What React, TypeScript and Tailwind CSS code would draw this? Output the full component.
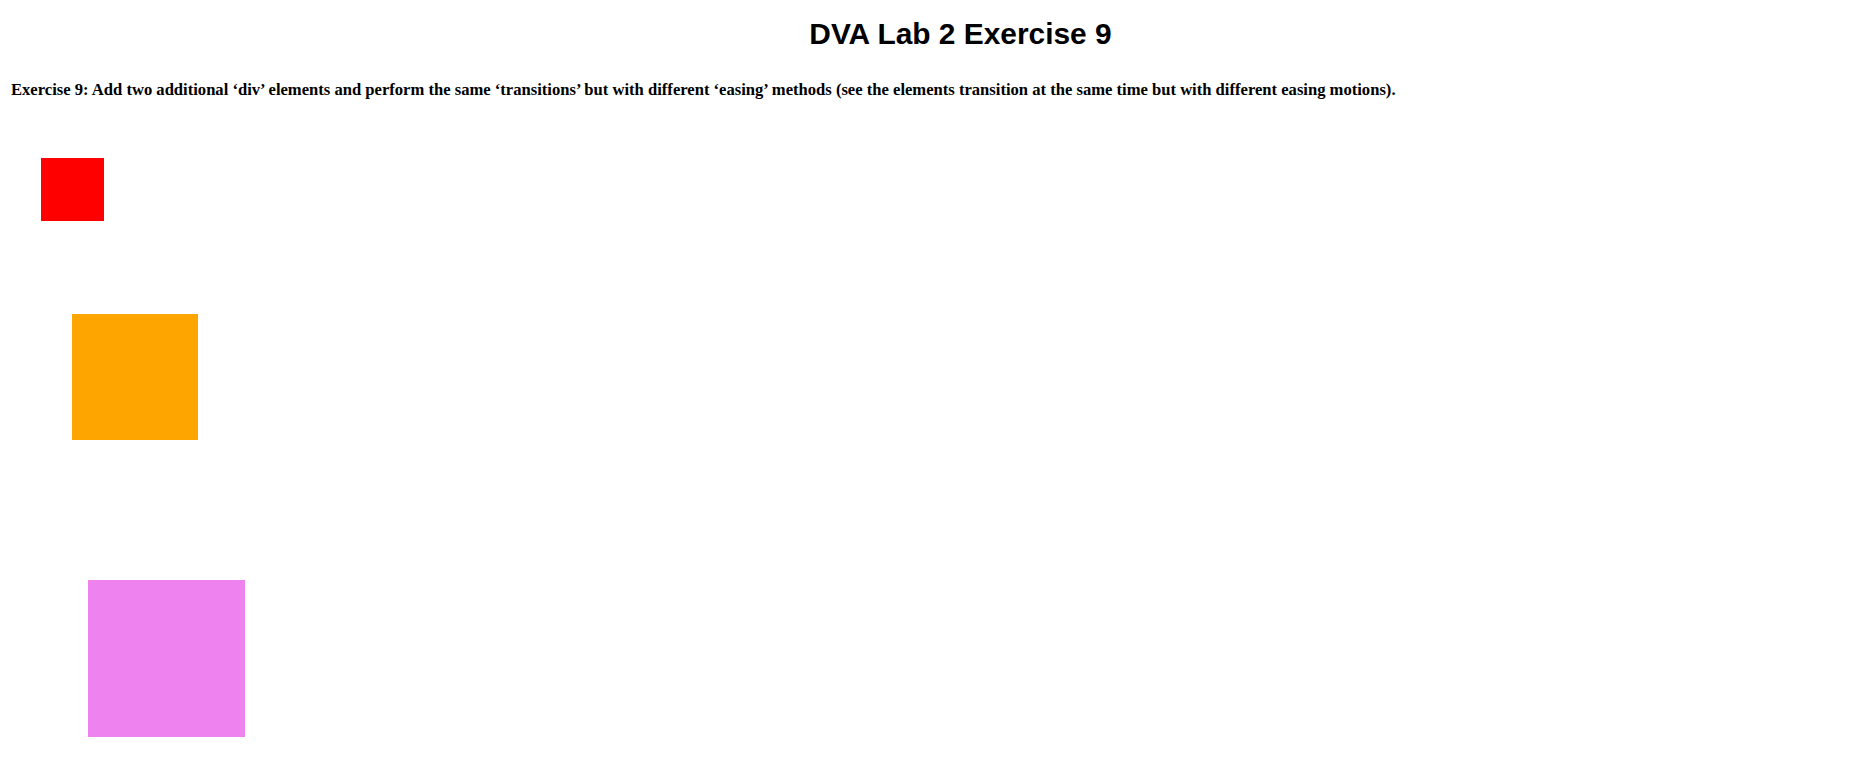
export default function App() {
  return (
    <div className="min-h-screen bg-white text-black">
      {/* Heading */}
      <h1 className="pt-[19px] pl-[54px] text-center text-[29.9px] leading-[30px] font-bold font-['Liberation_Sans',Arial,sans-serif]">
        DVA Lab 2 Exercise 9
      </h1>

      {/* Exercise description */}
      <p className="mt-[32px] pl-[11px] text-[16.6px] leading-[18px] font-bold font-['Liberation_Serif','Times_New_Roman',serif]">
        Exercise 9: Add two additional ‘div’ elements and perform the same ‘transitions’ but with different ‘easing’ methods (see the elements transition at the same time but with different easing motions).
      </p>

      {/* Transition boxes */}
      <div className="flex flex-col items-start">
        <div className="mt-[59px] ml-[41px] w-[63px] h-[63px] bg-[#ff0000]" />
        <div className="mt-[93px] ml-[72px] w-[126px] h-[126px] bg-[#ffa500]" />
        <div className="mt-[140px] ml-[88px] w-[157px] h-[157px] bg-[#ee82ee]" />
      </div>
    </div>
  );
}
